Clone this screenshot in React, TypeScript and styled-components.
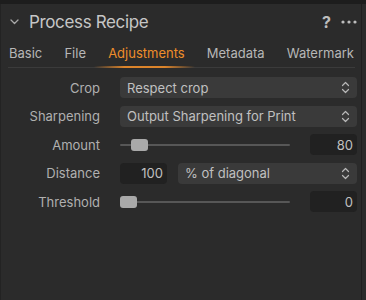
import styled, { createGlobalStyle } from 'styled-components'

const GlobalStyle = createGlobalStyle`
  html, body {
    margin: 0;
    padding: 0;
    background: #2b2b2b;
  }
  body {
    font-family: Inter, "Liberation Sans", sans-serif;
    -webkit-font-smoothing: antialiased;
  }
`

const Frame = styled.div`
  width: 366px;
  height: 300px;
  background: #2b2b2b;
  display: flex;
  flex-direction: column;
  overflow: hidden;
`

const TopStrip = styled.div`
  height: 4px;
  background: #1d1d1d;
  flex-shrink: 0;
`

const Panel = styled.div`
  flex: 1;
  width: 362px;
  border-left: 1px solid #232323;
  border-right: 1px solid #1f1f1f;
  box-sizing: border-box;
  display: flex;
  flex-direction: column;
`

const Header = styled.div`
  height: 35px;
  display: flex;
  align-items: center;
  padding: 0 4px 0 9px;
`

const Title = styled.div`
  flex: 1;
  margin-left: 10px;
  font-size: 17px;
  color: #c6c6c6;
  letter-spacing: -0.35px;
`

const HeaderAction = styled.span`
  color: #bdbdbd;
  font-size: 16px;
  font-weight: 700;
  margin-left: 10px;
  display: flex;
  align-items: center;
`

const TabBar = styled.div`
  display: flex;
  justify-content: space-between;
  margin: 0 6px 0 7px;
  padding: 0 1px 0 1px;
  height: 28px;
  border-bottom: 1px solid #3b3b3b;
`

const Tab = styled.div<{ $active?: boolean }>`
  position: relative;
  font-size: 13px;
  color: ${(p) => (p.$active ? '#ee8d2a' : '#b7b7b7')};
  display: flex;
  align-items: center;
  padding-bottom: 1px;

  &::after {
    content: '';
    display: ${(p) => (p.$active ? 'block' : 'none')};
    position: absolute;
    left: -14px;
    right: -10px;
    bottom: -1px;
    height: 2px;
    background: linear-gradient(
      90deg,
      rgba(238, 141, 42, 0) 0%,
      rgba(238, 141, 42, 0.9) 30%,
      rgba(238, 141, 42, 0.9) 70%,
      rgba(238, 141, 42, 0) 100%
    );
  }
`

const Rows = styled.div`
  display: grid;
  grid-template-columns: 99px 1fr;
  column-gap: 20px;
  row-gap: 7.6px;
  padding: 9px 4px 0 0;
`

const Label = styled.div`
  font-size: 13px;
  color: #b0b0b0;
  text-align: right;
  align-self: center;
`

const Select = styled.div`
  height: 21px;
  background: #3a3a3a;
  border-radius: 4px;
  display: flex;
  align-items: center;
  justify-content: space-between;
  padding: 0 7px 0 7px;
  color: #c0c0c0;
  font-size: 13px;
  flex: 1;
  box-sizing: border-box;
`

const Control = styled.div`
  display: flex;
  align-items: center;
  height: 21px;
`

const SliderTrack = styled.div`
  position: relative;
  flex: 1;
  height: 2px;
  background: #575757;
  border-radius: 1px;
  margin-right: 20px;
`

const Thumb = styled.div`
  position: absolute;
  top: -5px;
  width: 17px;
  height: 12px;
  border-radius: 3px;
  background: #a9a9a9;
`

const NumberField = styled.div<{ $gap?: number }>`
  width: 47px;
  height: 21px;
  background: #212121;
  border-radius: 4px;
  color: #c0c0c0;
  font-size: 13px;
  display: flex;
  align-items: center;
  justify-content: flex-end;
  padding-right: 4px;
  box-sizing: border-box;
  margin-right: ${(p) => p.$gap ?? 0}px;
  flex-shrink: 0;
`

function UpDown() {
  return (
    <svg width="9" height="13" viewBox="0 0 9 13" fill="none">
      <path d="M1.5 4.5 L4.5 1.5 L7.5 4.5" stroke="#b8b8b8" strokeWidth="1.2" strokeLinecap="round" strokeLinejoin="round" />
      <path d="M1.5 8.5 L4.5 11.5 L7.5 8.5" stroke="#b8b8b8" strokeWidth="1.2" strokeLinecap="round" strokeLinejoin="round" />
    </svg>
  )
}

function Chevron() {
  return (
    <svg width="9" height="6" viewBox="0 0 9 6" fill="none">
      <path d="M1 1 L4.5 4.5 L8 1" stroke="#a8a8a8" strokeWidth="1.3" strokeLinecap="round" strokeLinejoin="round" />
    </svg>
  )
}

function Dots() {
  return (
    <svg width="16" height="4" viewBox="0 0 16 4">
      <circle cx="2" cy="2" r="1.6" fill="#bdbdbd" />
      <circle cx="8" cy="2" r="1.6" fill="#bdbdbd" />
      <circle cx="14" cy="2" r="1.6" fill="#bdbdbd" />
    </svg>
  )
}

type SliderProps = { value: number; pos: number }

function SliderRow({ value, pos }: SliderProps) {
  return (
    <Control>
      <SliderTrack>
        <Thumb style={{ left: `${pos}px` }} />
      </SliderTrack>
      <NumberField>{value}</NumberField>
    </Control>
  )
}

export default function App() {
  return (
    <Frame>
      <GlobalStyle />
      <TopStrip />
      <Panel>
        <Header>
          <Chevron />
          <Title>Process Recipe</Title>
          <HeaderAction>?</HeaderAction>
          <HeaderAction>
            <Dots />
          </HeaderAction>
        </Header>
        <TabBar>
          <Tab>Basic</Tab>
          <Tab>File</Tab>
          <Tab $active>Adjustments</Tab>
          <Tab>Metadata</Tab>
          <Tab>Watermark</Tab>
        </TabBar>
        <Rows>
          <Label>Crop</Label>
          <Control>
            <Select>
              Respect crop
              <UpDown />
            </Select>
          </Control>
          <Label>Sharpening</Label>
          <Control>
            <Select>
              Output Sharpening for Print
              <UpDown />
            </Select>
          </Control>
          <Label>Amount</Label>
          <SliderRow value={80} pos={11} />
          <Label>Distance</Label>
          <Control>
            <NumberField $gap={11}>100</NumberField>
            <Select>
              % of diagonal
              <UpDown />
            </Select>
          </Control>
          <Label>Threshold</Label>
          <SliderRow value={0} pos={0} />
        </Rows>
      </Panel>
    </Frame>
  )
}
